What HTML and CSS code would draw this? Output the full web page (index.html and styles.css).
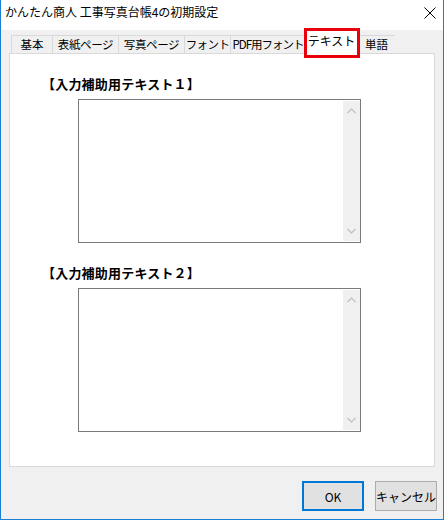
FILE: index.html
```html
<!DOCTYPE html>
<html lang="ja">
<head>
    <meta charset="UTF-8">
    <title>かんたん商人 工事写真台帳4の初期設定</title>
    <link rel="stylesheet" href="styles.css">
</head>
<body>
    <div class="window">
        <div class="titlebar">
            <span class="title">かんたん商人 工事写真台帳4の初期設定</span>
            <svg class="close" width="12" height="12" viewBox="0 0 12 12">
                <path d="M0.5 0.5 L11.5 11.5 M11.5 0.5 L0.5 11.5" stroke="#000" stroke-width="1" fill="none"/>
            </svg>
        </div>
        <div class="client">
            <div class="tabs">
                <div class="tab">基本</div>
                <div class="tab">表紙ページ</div>
                <div class="tab">写真ページ</div>
                <div class="tab">フォント</div>
                <div class="tab">PDF用フォント</div>
                <div class="tab active">テキスト</div>
                <div class="tab">単語</div>
                <div class="highlight"></div>
            </div>
            <div class="panel">
                <div class="field">
                    <div class="field-label">【入力補助用テキスト１】</div>
                    <div class="memo">
                        <div class="vscroll">
                            <svg width="9" height="6" viewBox="0 0 9 6"><path d="M0.5 5 L4.5 1 L8.5 5" stroke="#c4c4c4" stroke-width="1.4" fill="none"/></svg>
                            <svg width="9" height="6" viewBox="0 0 9 6"><path d="M0.5 1 L4.5 5 L8.5 1" stroke="#c4c4c4" stroke-width="1.4" fill="none"/></svg>
                        </div>
                    </div>
                </div>
                <div class="field">
                    <div class="field-label">【入力補助用テキスト２】</div>
                    <div class="memo">
                        <div class="vscroll">
                            <svg width="9" height="6" viewBox="0 0 9 6"><path d="M0.5 5 L4.5 1 L8.5 5" stroke="#c4c4c4" stroke-width="1.4" fill="none"/></svg>
                            <svg width="9" height="6" viewBox="0 0 9 6"><path d="M0.5 1 L4.5 5 L8.5 1" stroke="#c4c4c4" stroke-width="1.4" fill="none"/></svg>
                        </div>
                    </div>
                </div>
            </div>
            <div class="buttons">
                <button class="btn default">OK</button>
                <button class="btn">キャンセル</button>
            </div>
        </div>
    </div>
</body>
</html>
```

FILE: styles.css
```css
body {
    margin: 0;
    font-family: "Noto Sans CJK JP", "Noto Sans", sans-serif;
    font-size: 12px;
    color: #000;
}
.window {
    width: 444px;
    height: 520px;
    box-sizing: border-box;
    border: 1px solid #1a7fd4;
    border-top: none;
    display: flex;
    flex-direction: column;
    background: #f0f0f0;
}
.titlebar {
    height: 30px;
    background: #fff;
    display: flex;
    align-items: center;
    justify-content: space-between;
    padding: 0 7px 0 4px;
}
.title {
    font-size: 12px;
    line-height: 16px;
    margin-top: -6px;
}
.close {
    margin-top: -4px;
}
.client {
    flex: 1;
    display: flex;
    flex-direction: column;
    padding: 0 8px;
}
.tabs {
    position: relative;
    display: flex;
    align-items: flex-end;
    height: 24px;
    padding-left: 2px;
    margin-bottom: -1px;
}
.tab {
    height: 19px;
    box-sizing: border-box;
    border: 1px solid #d9d9d9;
    border-right: none;
    background: #f0f0f0;
    text-align: center;
    line-height: 17px;
    white-space: nowrap;
    font-size: 11.5px;
}
.tab:last-of-type {
    border-right: 1px solid #d9d9d9;
}
.tab:nth-child(1) { width: 41px; }
.tab:nth-child(2) { width: 66px; letter-spacing: -0.4px; }
.tab:nth-child(3) { width: 66px; letter-spacing: -0.4px; }
.tab:nth-child(4) { width: 46px; letter-spacing: -0.6px; }
.tab:nth-child(5) { width: 75px; letter-spacing: -1px; }
.tab:nth-child(6) { width: 53px; }
.tab:nth-child(7) { width: 38px; }
.tab.active {
    height: 24px;
    background: #fff;
    border-bottom: none;
    border-right: 1px solid #d9d9d9;
    line-height: 20px;
    position: relative;
    z-index: 1;
    margin-right: -1px;
    font-size: 12px;
}
.highlight {
    position: absolute;
    left: 295px;
    top: -2px;
    width: 56px;
    height: 30px;
    box-sizing: border-box;
    border: 3px solid #e8000b;
    z-index: 2;
}
.panel {
    height: 414px;
    box-sizing: border-box;
    background: #fff;
    border: 1px solid #d9d9d9;
    padding: 21px 0 0 32px;
    display: flex;
    flex-direction: column;
    gap: 21px;
}
.field-label {
    font-weight: bold;
    font-size: 13px;
    line-height: 18px;
    letter-spacing: 0.2px;
}
.memo {
    margin: 6px 0 0 36px;
    width: 283px;
    height: 144px;
    box-sizing: border-box;
    border: 1px solid #7a7a7a;
    background: #fff;
    display: flex;
    justify-content: flex-end;
    padding: 1px 0;
}
.vscroll {
    width: 17px;
    background: #f0f0f0;
    display: flex;
    flex-direction: column;
    justify-content: space-between;
    align-items: center;
    padding: 7px 0;
}
.buttons {
    display: flex;
    justify-content: flex-end;
    gap: 11px;
    padding: 14px 0 0;
    margin-right: -2px;
}
.btn {
    width: 62px;
    height: 30px;
    box-sizing: border-box;
    background: #e1e1e1;
    border: 1px solid #adadad;
    font-family: "Noto Sans CJK JP", "Noto Sans", sans-serif;
    font-size: 12px;
    padding: 0;
    color: #000;
}
.btn.default {
    border: 2px solid #0078d7;
}
```
